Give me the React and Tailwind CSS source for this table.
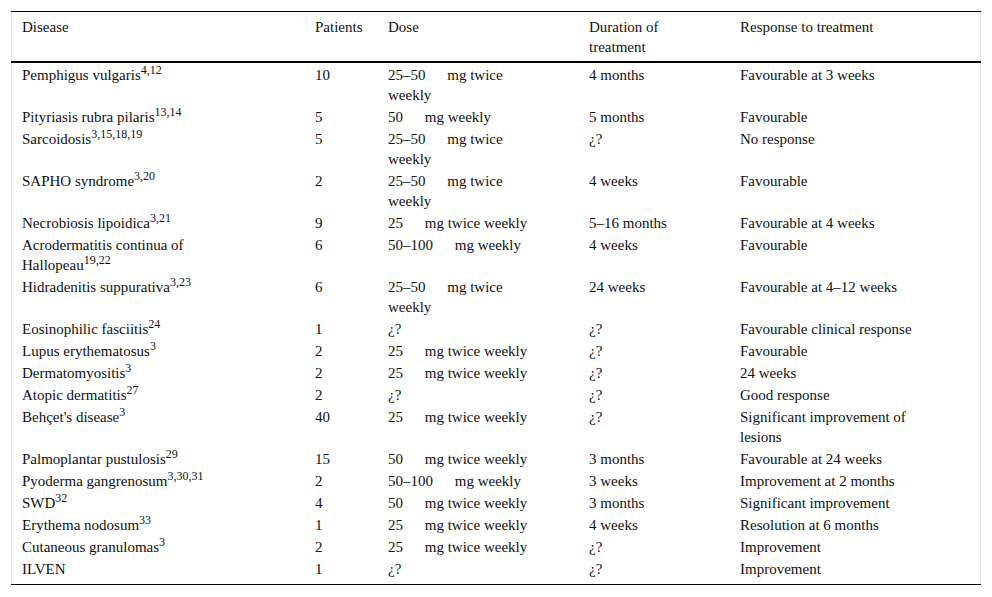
import React from "react";

const rows = [
  ["Pemphigus vulgaris", "4,12", "10", ["25–50", "mg twice weekly"], "4 months", "Favourable at 3 weeks"],
  ["Pityriasis rubra pilaris", "13,14", "5", ["50", "mg weekly"], "5 months", "Favourable"],
  ["Sarcoidosis", "3,15,18,19", "5", ["25–50", "mg twice weekly"], "¿?", "No response"],
  ["SAPHO syndrome", "3,20", "2", ["25–50", "mg twice weekly"], "4 weeks", "Favourable"],
  ["Necrobiosis lipoidica", "3,21", "9", ["25", "mg twice weekly"], "5–16 months", "Favourable at 4 weeks"],
  ["Acrodermatitis continua of Hallopeau", "19,22", "6", ["50–100", "mg weekly"], "4 weeks", "Favourable"],
  ["Hidradenitis suppurativa", "3,23", "6", ["25–50", "mg twice weekly"], "24 weeks", "Favourable at 4–12 weeks"],
  ["Eosinophilic fasciitis", "24", "1", null, "¿?", "Favourable clinical response"],
  ["Lupus erythematosus", "3", "2", ["25", "mg twice weekly"], "¿?", "Favourable"],
  ["Dermatomyositis", "3", "2", ["25", "mg twice weekly"], "¿?", "24 weeks"],
  ["Atopic dermatitis", "27", "2", null, "¿?", "Good response"],
  ["Behçet's disease", "3", "40", ["25", "mg twice weekly"], "¿?", "Significant improvement of lesions"],
  ["Palmoplantar pustulosis", "29", "15", ["50", "mg twice weekly"], "3 months", "Favourable at 24 weeks"],
  ["Pyoderma gangrenosum", "3,30,31", "2", ["50–100", "mg weekly"], "3 weeks", "Improvement at 2 months"],
  ["SWD", "32", "4", ["50", "mg twice weekly"], "3 months", "Significant improvement"],
  ["Erythema nodosum", "33", "1", ["25", "mg twice weekly"], "4 weeks", "Resolution at 6 months"],
  ["Cutaneous granulomas", "3", "2", ["25", "mg twice weekly"], "¿?", "Improvement"],
  ["ILVEN", "", "1", null, "¿?", "Improvement"],
];

function Dose({ dose }) {
  if (!dose) return "¿?";
  return (
    <>
      <span className="mr-[18px]">{dose[0]}</span> {dose[1]}
    </>
  );
}

export default function App() {
  const cell = "pl-[11px] pr-[40px] align-top text-left font-normal";
  return (
    <div className="bg-white px-[11px] pt-[11px] font-['Liberation_Serif','Times_New_Roman',serif] text-[15px] leading-[20px] text-[#111]">
      <div className="w-[970px] border-x border-[#e6e6e6]">
        <table className="w-[970px] table-fixed border-collapse -mx-px">
          <colgroup>
            <col className="w-[293px]" />
            <col className="w-[73px]" />
            <col className="w-[201px]" />
            <col className="w-[151px]" />
            <col className="w-[252px]" />
          </colgroup>
          <thead>
            <tr className="border-t border-black border-b-2">
              <th className={cell + " pt-[5px] pb-[4px]"}>Disease</th>
              <th className="pl-[11px] pr-0 pt-[5px] pb-[4px] align-top text-left font-normal">Patients</th>
              <th className={cell + " pt-[5px] pb-[4px]"}>Dose</th>
              <th className={cell + " pt-[5px] pb-[4px]"}>Duration of treatment</th>
              <th className={cell + " pt-[5px] pb-[4px]"}>Response to treatment</th>
            </tr>
          </thead>
          <tbody>
            {rows.map((r, i) => {
              const last = i === rows.length - 1;
              const pad = last ? " pt-[2px] pb-[5px]" : " pt-[2px] pb-0";
              return (
                <tr key={i} className={last ? "border-b border-black" : ""}>
                  <td className={cell + pad}>
                    {r[0]}
                    {r[1] && <sup className="text-[12px]">{r[1]}</sup>}
                  </td>
                  <td className={"pl-[11px] pr-0 align-top" + pad}>{r[2]}</td>
                  <td className={cell + pad}>
                    <Dose dose={r[3]} />
                  </td>
                  <td className={cell + pad}>{r[4]}</td>
                  <td className={cell + pad}>{r[5]}</td>
                </tr>
              );
            })}
          </tbody>
        </table>
      </div>
    </div>
  );
}
